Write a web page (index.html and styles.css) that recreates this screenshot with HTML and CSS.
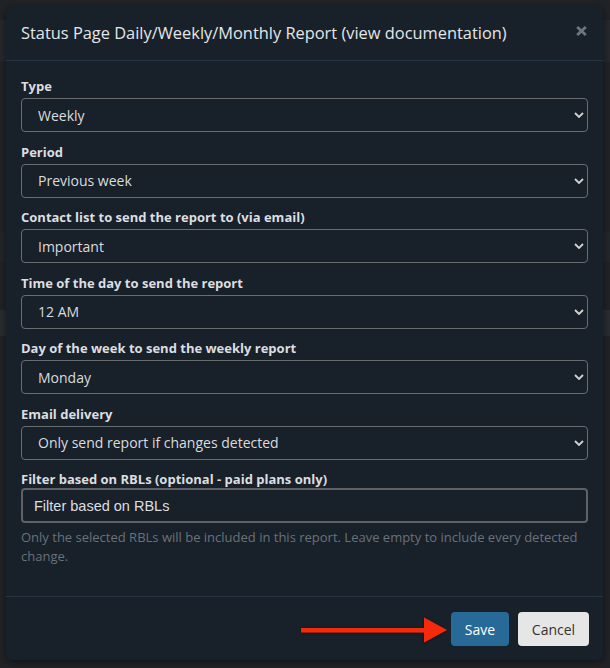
FILE: index.html
```html
<!DOCTYPE html>
<html>
<head>
<meta charset="utf-8">
<link rel="stylesheet" href="styles.css">
</head>
<body>
<div class="backdrop">
  <div class="bg-strip bg-a"></div>
  <div class="bg-strip bg-b"></div>
  <div class="bg-strip bg-c"></div>
</div>
<div class="modal">
  <div class="modal-header">
    <h4 class="modal-title">Status Page Daily/Weekly/Monthly Report (<span class="doc-link">view documentation</span>)</h4>
    <button class="close" aria-label="Close">
      <svg width="11" height="10" viewBox="0 0 11 10"><path d="M1.2 1 L9.8 9 M9.8 1 L1.2 9" stroke="#6e757c" stroke-width="2.8" fill="none"/></svg>
    </button>
  </div>
  <div class="modal-body">
    <div class="form-group">
      <label class="form-label">Type</label>
      <div class="select-wrap">
        <select class="form-select"><option>Weekly</option></select>
        <svg class="chev" width="10" height="6" viewBox="0 0 10 6"><path d="M1 1 L5 5 L9 1" stroke="#d4d4d4" stroke-width="1.8" fill="none"/></svg>
      </div>
    </div>
    <div class="form-group">
      <label class="form-label">Period</label>
      <div class="select-wrap">
        <select class="form-select"><option>Previous week</option></select>
        <svg class="chev" width="10" height="6" viewBox="0 0 10 6"><path d="M1 1 L5 5 L9 1" stroke="#d4d4d4" stroke-width="1.8" fill="none"/></svg>
      </div>
    </div>
    <div class="form-group">
      <label class="form-label">Contact list to send the report to (via email)</label>
      <div class="select-wrap">
        <select class="form-select"><option>Important</option></select>
        <svg class="chev" width="10" height="6" viewBox="0 0 10 6"><path d="M1 1 L5 5 L9 1" stroke="#d4d4d4" stroke-width="1.8" fill="none"/></svg>
      </div>
    </div>
    <div class="form-group">
      <label class="form-label">Time of the day to send the report</label>
      <div class="select-wrap">
        <select class="form-select"><option>12 AM</option></select>
        <svg class="chev" width="10" height="6" viewBox="0 0 10 6"><path d="M1 1 L5 5 L9 1" stroke="#d4d4d4" stroke-width="1.8" fill="none"/></svg>
      </div>
    </div>
    <div class="form-group">
      <label class="form-label">Day of the week to send the weekly report</label>
      <div class="select-wrap">
        <select class="form-select"><option>Monday</option></select>
        <svg class="chev" width="10" height="6" viewBox="0 0 10 6"><path d="M1 1 L5 5 L9 1" stroke="#d4d4d4" stroke-width="1.8" fill="none"/></svg>
      </div>
    </div>
    <div class="form-group">
      <label class="form-label">Email delivery</label>
      <div class="select-wrap">
        <select class="form-select"><option>Only send report if changes detected</option></select>
        <svg class="chev" width="10" height="6" viewBox="0 0 10 6"><path d="M1 1 L5 5 L9 1" stroke="#d4d4d4" stroke-width="1.8" fill="none"/></svg>
      </div>
    </div>
    <div class="form-group last">
      <label class="form-label tight">Filter based on RBLs (optional - paid plans only)</label>
      <input class="form-input" type="text" placeholder="Filter based on RBLs">
      <p class="help">Only the selected RBLs will be included in this report. Leave empty to include every detected change.</p>
    </div>
  </div>
  <div class="modal-footer">
    <button class="btn btn-primary">Save</button>
    <button class="btn btn-default">Cancel</button>
  </div>
</div>
<svg class="arrow" width="160" height="34" viewBox="0 0 160 34">
  <defs>
    <filter id="sh" x="-10%" y="-30%" width="120%" height="160%">
      <feDropShadow dx="0" dy="0.5" stdDeviation="1" flood-color="#000" flood-opacity="0.6"/>
    </filter>
  </defs>
  <g filter="url(#sh)" fill="#f52a0a">
    <rect x="1" y="15" width="127" height="4.5"/>
    <polygon points="124,4.5 147,17 124,29.5"/>
  </g>
</svg>
</body>
</html>
```

FILE: styles.css
```css
html, body {
  margin: 0;
  padding: 0;
}
body {
  background: #212327;
  width: 610px;
  height: 668px;
  overflow: hidden;
  position: relative;
  font-family: "Open Sans", "DejaVu Sans", sans-serif;
  padding: 6px 7px 8px 6px;
  box-sizing: border-box;
}
.backdrop {
  position: absolute;
  left: 0;
  top: 0;
  width: 610px;
  height: 668px;
}
.bg-strip {
  position: absolute;
  left: 0;
  width: 610px;
  background: #26292d;
}
.bg-a { top: 20px; height: 42px; }
.bg-b { top: 232px; height: 30px; background: #24272b; }
.bg-c { top: 310px; height: 26px; background: #2a2d31; }

.modal {
  position: relative;
  width: 597px;
  height: 654px;
  background: #18202a;
  border-radius: 6px;
  box-shadow: 0 2px 8px rgba(0, 0, 0, 0.5);
  display: flex;
  flex-direction: column;
  box-sizing: border-box;
}
.modal-header {
  display: flex;
  align-items: center;
  justify-content: space-between;
  padding: 15px 15px 15px 15px;
  border-bottom: 1px solid #253342;
}
.modal-title {
  margin: 0;
  font-weight: 400;
  font-size: 16.4px;
  line-height: 24px;
  color: #e4e6e8;
}
.close {
  background: none;
  border: 0;
  padding: 0;
  margin: -4px 1px 0 0;
  display: flex;
  cursor: pointer;
}
.modal-body {
  padding: 15px 15px 0 15px;
  flex: 1;
}
.form-group {
  margin-bottom: 9.5px;
}
.form-label {
  display: block;
  font-weight: 700;
  font-size: 13px;
  line-height: 20px;
  color: #dcdee0;
  margin-bottom: 2px;
}
.form-label.tight {
  margin-bottom: -1px;
}
.select-wrap {
  position: relative;
}
.form-select {
  -webkit-appearance: none;
  appearance: none;
  display: block;
  width: 100%;
  height: 34px;
  box-sizing: border-box;
  background: #18202a;
  border: 1px solid #6a6d70;
  border-radius: 4px;
  color: #dadcde;
  font-family: "Open Sans", "DejaVu Sans", sans-serif;
  font-size: 14px;
  padding: 0 20px 0 16px;
  outline: none;
}
.chev {
  position: absolute;
  right: 4px;
  top: 14px;
  pointer-events: none;
}
.form-input {
  display: block;
  width: 100%;
  height: 35px;
  box-sizing: border-box;
  background: #18202a;
  border: 2px solid #5f6164;
  border-radius: 4px;
  color: #dadcde;
  font-family: "Liberation Sans", Arial, sans-serif;
  font-size: 14.5px;
  padding: 0 11px;
  outline: none;
}
.form-input::placeholder {
  color: #dcdee0;
  opacity: 1;
}
.help {
  margin: 5px 0 0 0;
  font-size: 13px;
  line-height: 19px;
  color: #6b7179;
}
.modal-footer {
  display: flex;
  justify-content: flex-end;
  gap: 9px;
  padding: 15px 14px 14px 15px;
  border-top: 1px solid #253342;
}
.btn {
  height: 34px;
  border: 0;
  border-radius: 4px;
  font-family: "Open Sans", "DejaVu Sans", sans-serif;
  font-size: 14px;
  padding: 0 14px;
  cursor: pointer;
}
.btn-primary {
  background: #286a97;
  color: #ffffff;
  width: 58px;
  padding: 0;
}
.btn-default {
  background: #e6e6e6;
  color: #333333;
  width: 71px;
  padding: 0;
}
.arrow {
  position: absolute;
  left: 300px;
  top: 613px;
}
```
